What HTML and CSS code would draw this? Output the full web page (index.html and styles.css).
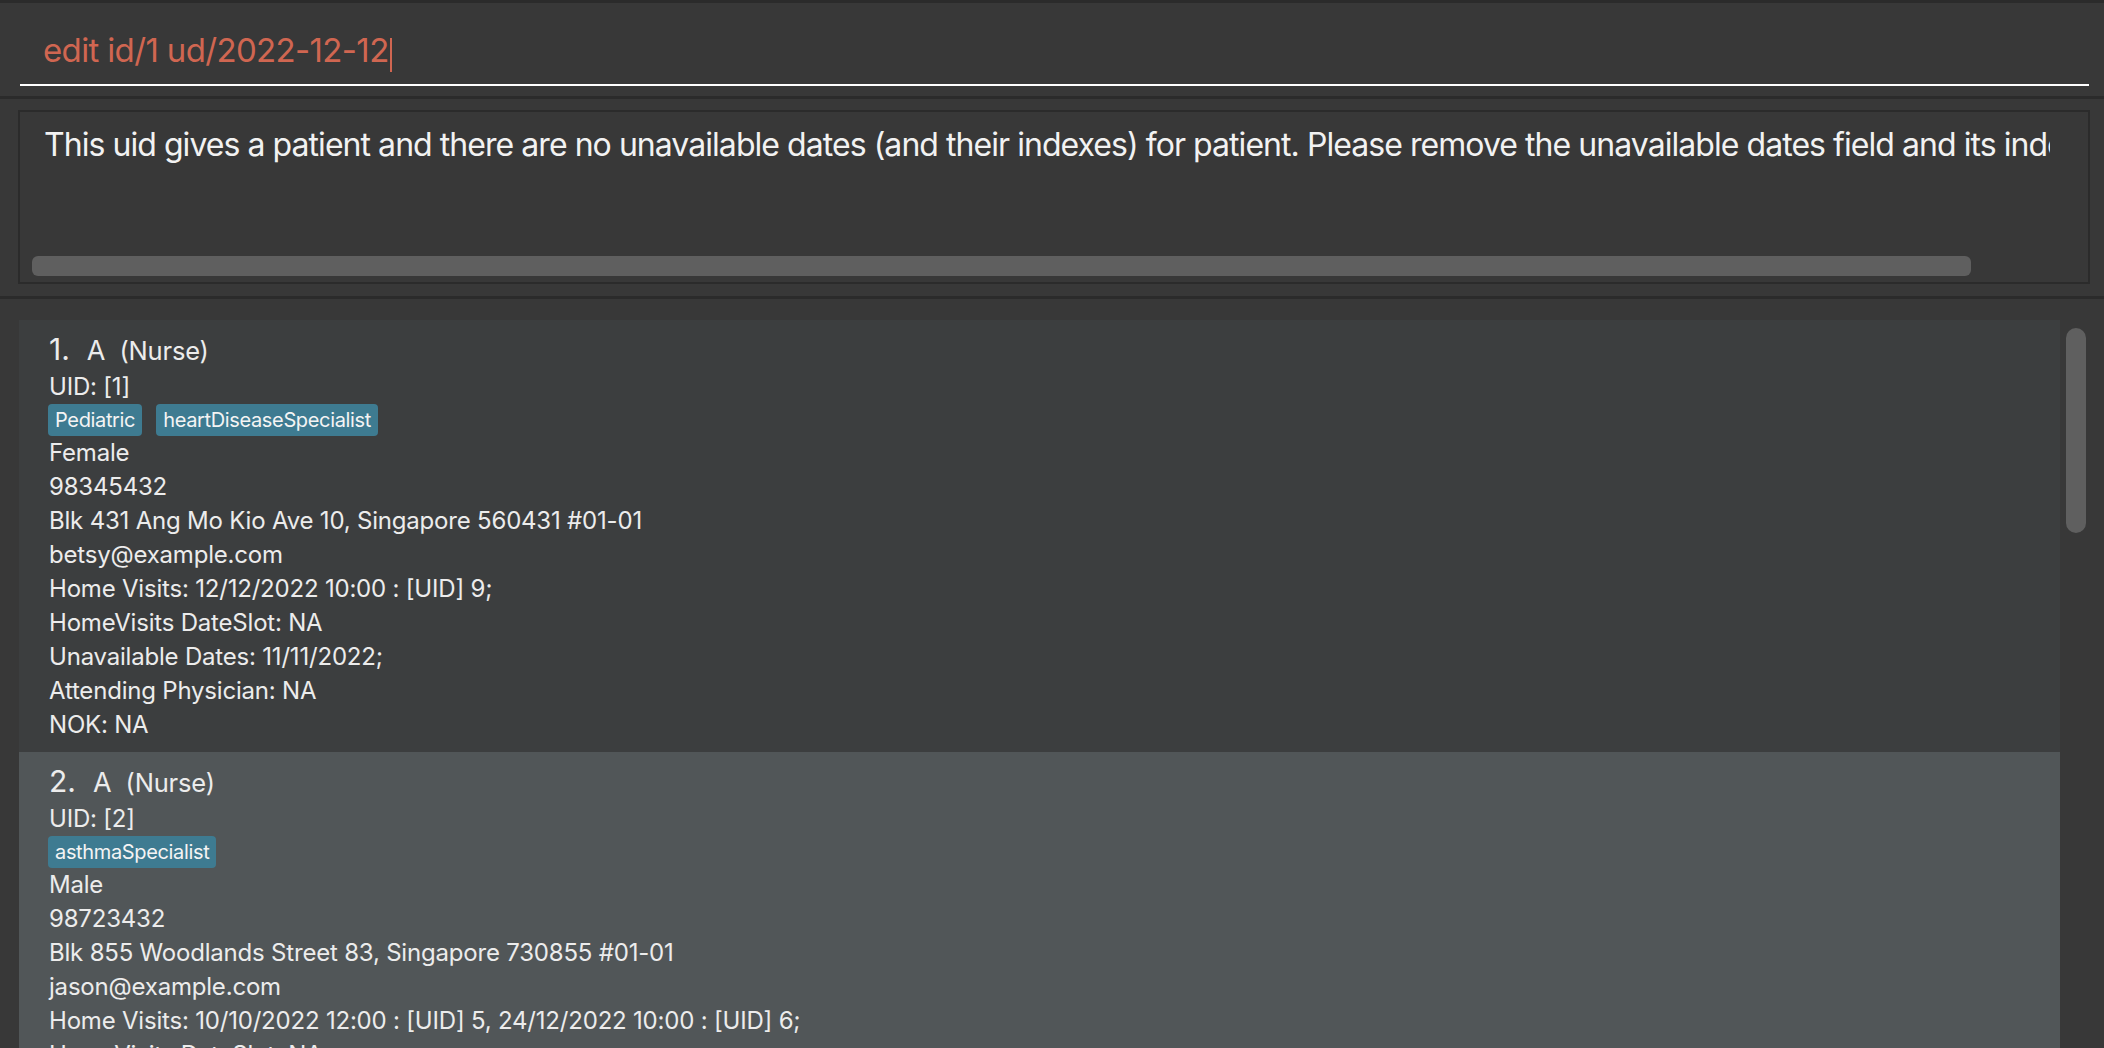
FILE: index.html
```html
<!DOCTYPE html>
<html lang="en">
<head>
<meta charset="utf-8">
<title>Patient list</title>
<link rel="stylesheet" href="styles.css">
</head>
<body>
<div class="app">
  <div class="cmd-pane">
    <div class="cmd-field"><span class="cmd-text">edit id/1 ud/2022-12-12</span><span class="caret"></span></div>
  </div>
  <div class="result-pane">
    <div class="result-box">
      <div class="result-text">This uid gives a patient and there are no unavailable dates (and their indexes) for patient. Please remove the unavailable dates field and its indexes.</div>
      <div class="hscroll"><div class="hthumb"></div></div>
    </div>
  </div>
  <div class="list-pane">
    <div class="list">
      <div class="card odd">
        <div class="title"><span class="id">1.</span><span class="name">A</span><span class="role">(Nurse)</span></div>
        <div class="line">UID: [1]</div>
        <div class="tags"><span class="tag">Pediatric</span><span class="tag">heartDiseaseSpecialist</span></div>
        <div class="line">Female</div>
        <div class="line">98345432</div>
        <div class="line">Blk 431 Ang Mo Kio Ave 10, Singapore 560431 #01-01</div>
        <div class="line">betsy@example.com</div>
        <div class="line">Home Visits: 12/12/2022 10:00 : [UID] 9;</div>
        <div class="line">HomeVisits DateSlot: NA</div>
        <div class="line">Unavailable Dates: 11/11/2022;</div>
        <div class="line">Attending Physician: NA</div>
        <div class="line">NOK: NA</div>
      </div>
      <div class="card even">
        <div class="title"><span class="id">2.</span><span class="name">A</span><span class="role">(Nurse)</span></div>
        <div class="line">UID: [2]</div>
        <div class="tags"><span class="tag">asthmaSpecialist</span></div>
        <div class="line">Male</div>
        <div class="line">98723432</div>
        <div class="line">Blk 855 Woodlands Street 83, Singapore 730855 #01-01</div>
        <div class="line">jason@example.com</div>
        <div class="line">Home Visits: 10/10/2022 12:00 : [UID] 5, 24/12/2022 10:00 : [UID] 6;</div>
        <div class="line">HomeVisits DateSlot: NA</div>
        <div class="line">Unavailable Dates: NA</div>
        <div class="line">Attending Physician: NA</div>
        <div class="line">NOK: NA</div>
      </div>
    </div>
    <div class="vscroll"><div class="vthumb"></div></div>
  </div>
</div>
</body>
</html>
```
FILE: styles.css
```css
html, body {
  margin: 0;
  padding: 0;
}
body {
  width: 2104px;
  height: 1048px;
  overflow: hidden;
  background: #383838;
  font-family: Inter, "Noto Sans", "Liberation Sans", sans-serif;
  color: #ececec;
}
.app {
  display: flex;
  flex-direction: column;
  height: 1048px;
  border-top: 3px solid #2b2b2b;
  box-sizing: border-box;
}
.cmd-pane {
  flex: none;
  height: 96px;
  box-sizing: border-box;
  padding: 0 15px 0 20px;
  border-bottom: 3px solid #2b2b2b;
}
.cmd-field {
  height: 83px;
  box-sizing: border-box;
  padding: 27px 0 0 23px;
  border-bottom: 2px solid #ffffff;
  white-space: nowrap;
}
.cmd-text {
  color: #d06651;
  font-size: 33px;
  line-height: 40px;
  letter-spacing: -0.65px;
}
.caret {
  display: inline-block;
  width: 2px;
  height: 34px;
  margin-left: 1px;
  vertical-align: -10px;
  background: #d06651;
}
.result-pane {
  flex: none;
  height: 200px;
  box-sizing: border-box;
  padding: 11px 14px 12px 18px;
  border-bottom: 3px solid #2b2b2b;
}
.result-box {
  height: 100%;
  box-sizing: border-box;
  border: 2px solid #2b2b2b;
  display: flex;
  flex-direction: column;
  overflow: hidden;
}
.result-text {
  flex: 1;
  margin-right: 38px;
  padding: 13px 0 0 24px;
  font-size: 32px;
  line-height: 40px;
  letter-spacing: -0.95px;
  white-space: nowrap;
  overflow: hidden;
  color: #f2f2f2;
}
.hscroll {
  flex: none;
  padding: 0 0 6px 12px;
}
.hthumb {
  width: 1939px;
  height: 20px;
  border-radius: 6px;
  background: #5f5f5f;
}
.list-pane {
  flex: 1;
  min-height: 0;
  display: flex;
  overflow: hidden;
}
.list {
  flex: 1;
  padding: 21px 0 0 19px;
}
.vscroll {
  flex: none;
  width: 44px;
  box-sizing: border-box;
  padding: 29px 18px 0 6px;
}
.vthumb {
  height: 205px;
  border-radius: 10px;
  background: #5f5f5f;
}
.card {
  padding: 0 0 10px 30px;
}
.card.odd {
  background: #3c3e3f;
}
.card.even {
  background: #515658;
}
.title {
  display: flex;
  align-items: baseline;
  height: 50px;
  box-sizing: border-box;
  padding-top: 14px;
}
.title span {
  line-height: 1;
}
.id {
  font-size: 30px;
  margin-right: 17px;
}
.name {
  font-size: 27px;
  margin-right: 14px;
}
.role {
  font-size: 25.5px;
  letter-spacing: -0.2px;
}
.line {
  font-size: 24px;
  line-height: 34px;
  letter-spacing: -0.2px;
  white-space: nowrap;
}
.tags {
  display: flex;
  gap: 14px;
  height: 32px;
  margin-left: -1px;
}
.tag {
  background: #3e7b91;
  color: #f4f4f4;
  font-size: 20px;
  line-height: 32px;
  letter-spacing: -0.35px;
  padding: 0 7px;
  border-radius: 4px;
}
```
